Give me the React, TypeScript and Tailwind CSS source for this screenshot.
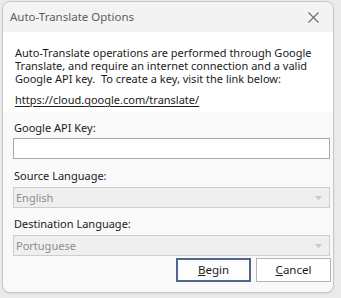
const font = { fontFamily: '"Noto Sans", "Open Sans", sans-serif' }

function DisabledSelect({ value }: { value: string }) {
  return (
    <div className="ml-[10px] flex h-[21px] w-[317px] items-center justify-between border border-[#cdcdcd] bg-[#efefef] pl-[2px] pr-[7px]">
      <span className="text-[11px] leading-none text-[#8d8d8d]">{value}</span>
      <svg width="7" height="4" viewBox="0 0 7 4">
        <path d="M0 0 L7 0 L3.5 4 Z" fill="#c8c8c8" />
      </svg>
    </div>
  )
}

export default function App() {
  return (
    <div className="h-[298px] w-[341px] bg-[#ebebeb] pl-[2px] pt-[1px]" style={font}>
      <div className="flex h-[292px] w-[332px] flex-col overflow-hidden rounded-[8px] border border-[#c6c6c6] bg-[#f9f9f9] shadow-[0_1px_2px_rgba(0,0,0,0.08)]">
        {/* Title bar */}
        <div className="flex h-[30px] items-center justify-between bg-[#f3f3f3] pl-[7px] pr-[14px]">
          <span className="text-[11.5px] text-[#5e5e5e]">Auto-Translate Options</span>
          <svg width="11" height="11" viewBox="0 0 11 11">
            <path d="M0.5 0.5 L10.5 10.5 M10.5 0.5 L0.5 10.5" stroke="#6b6b6b" strokeWidth="1.1" />
          </svg>
        </div>

        {/* Info panel */}
        <div className="h-[80px] bg-white pl-[12px] pt-[14px] text-[11px] leading-[13px] text-[#1b1b1b]">
          <p>
            Auto-Translate operations are performed through Google
            <br />
            Translate, and require an internet connection and a valid
            <br />
            Google API key.&nbsp; To create a key, visit the link below:
          </p>
          <p className="mt-[8px] underline underline-offset-2">https://cloud.google.com/translate/</p>
        </div>

        {/* Fields */}
        <div className="flex flex-col text-[11px] text-[#1b1b1b]">
          <label className="ml-[11px] mt-[9px] leading-[13px]">Google API Key:</label>
          <div className="ml-[10px] mt-[4px] h-[21px] w-[317px] border border-[#a8a8a8] bg-white" />

          <label className="ml-[11px] mt-[10px] leading-[13px]">Source Language:</label>
          <div className="mt-[5px]">
            <DisabledSelect value="English" />
          </div>

          <label className="ml-[11px] mt-[9px] leading-[13px]">Destination Language:</label>
          <div className="mt-[5px]">
            <DisabledSelect value="Portuguese" />
          </div>

          <div className="mt-[2px] flex justify-end gap-[5px] pr-[2px]">
            <button className="h-[24px] w-[75px] border-2 border-[#4e6690] bg-[#fdfdfd] text-[11.5px] text-[#1b1b1b]">
              <span className="underline">B</span>egin
            </button>
            <button className="h-[24px] w-[75px] border border-[#b4b4b4] bg-white text-[11.5px] text-[#1b1b1b]">
              <span className="underline">C</span>ancel
            </button>
          </div>
        </div>
      </div>
    </div>
  )
}
